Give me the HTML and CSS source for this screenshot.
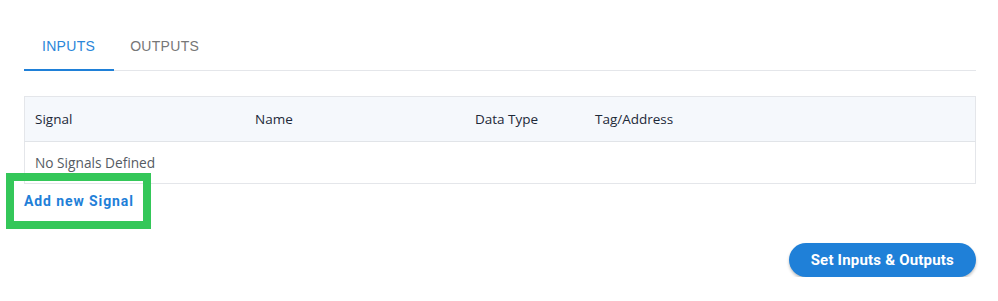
FILE: index.html
```html
<!DOCTYPE html>
<html lang="en">
<head>
    <meta charset="UTF-8">
    <title>Signals</title>
    <link rel="stylesheet" href="styles.css">
</head>
<body>
    <div class="panel">
        <div class="tabs">
            <div class="tab active">INPUTS</div>
            <div class="tab">OUTPUTS</div>
        </div>

        <table class="signals">
            <thead>
                <tr>
                    <th class="col-signal">Signal</th>
                    <th class="col-name">Name</th>
                    <th class="col-type">Data Type</th>
                    <th>Tag/Address</th>
                </tr>
            </thead>
            <tbody>
                <tr>
                    <td colspan="4" class="empty">No Signals Defined</td>
                </tr>
            </tbody>
        </table>

        <div class="add-row">
            <a class="add-link" href="#">Add new Signal</a>
            <span class="highlight-box"></span>
        </div>

        <div class="actions">
            <button class="primary">Set Inputs &amp; Outputs</button>
        </div>
    </div>
</body>
</html>
```

FILE: styles.css
```css
body {
    margin: 0;
    background-color: #ffffff;
    font-family: "Open Sans", Lato, sans-serif;
}

.panel {
    padding: 30px 22px 0 24px;
}

.tabs {
    display: flex;
    border-bottom: 1px solid #e4e6ea;
}

.tab {
    font-family: "Liberation Sans", Arial, sans-serif;
    font-size: 14px;
    letter-spacing: 0.3px;
    color: #777777;
    padding: 8px 18px 15px 18px;
    margin-bottom: -1px;
    border-bottom: 2px solid transparent;
}

.tab.active {
    color: #2a86d9;
    border-bottom-color: #1f80d8;
    padding-right: 19px;
}

.tab + .tab {
    padding-left: 16px;
}

.signals {
    width: 100%;
    margin-top: 25px;
    border-collapse: collapse;
    border: 1px solid #e4e6ea;
}

.signals th {
    text-align: left;
    font-weight: normal;
    font-size: 13.5px;
    color: #1d2939;
    background-color: #f5f8fc;
    height: 44px;
    padding: 0 10px;
    border-bottom: 1px solid #e1e4e8;
}

.col-signal, .col-name {
    width: 200px;
}

.col-type {
    width: 100px;
}

.signals td {
    font-size: 13.7px;
    color: #555b63;
    height: 41px;
    padding: 0 10px;
}

.add-row {
    position: relative;
    padding: 5px 0 10px 0;
}

.add-link {
    font-family: Roboto, sans-serif;
    font-weight: bold;
    font-size: 14px;
    letter-spacing: 0.9px;
    color: #1f80d8;
    text-decoration: none;
}

.highlight-box {
    position: absolute;
    left: -18px;
    top: -11px;
    width: 129px;
    height: 40px;
    border: 8px solid #34c759;
}

.actions {
    display: flex;
    justify-content: flex-end;
    padding-top: 22px;
}

.primary {
    font-family: Roboto, sans-serif;
    font-weight: bold;
    font-size: 15px;
    letter-spacing: 0.2px;
    color: #ffffff;
    background-color: #1f80d8;
    border: none;
    border-radius: 17px;
    height: 34px;
    padding: 0 22px;
    box-shadow: 0 2px 3px rgba(0,0,0,0.25);
    cursor: pointer;
}
```
